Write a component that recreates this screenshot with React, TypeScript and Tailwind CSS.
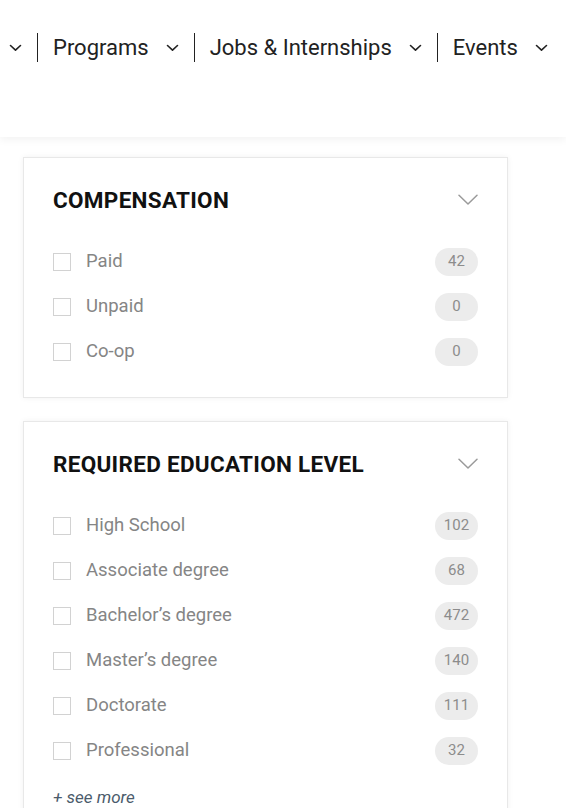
import React from 'react'

interface Option {
  label: string;
  count: number;
}

const compensation: Option[] = [
  { label: 'Paid', count: 42 },
  { label: 'Unpaid', count: 0 },
  { label: 'Co-op', count: 0 },
]

const education: Option[] = [
  { label: 'High School', count: 102 },
  { label: 'Associate degree', count: 68 },
  { label: 'Bachelor\u2019s degree', count: 472 },
  { label: 'Master\u2019s degree', count: 140 },
  { label: 'Doctorate', count: 111 },
  { label: 'Professional', count: 32 },
]

function NavChevron() {
  return (
    <svg width="13" height="8" viewBox="0 0 13 8" fill="none" className="shrink-0">
      <path d="M1.5 1.5 L6.5 6.2 L11.5 1.5" stroke="#222" strokeWidth="1.6" strokeLinecap="round" strokeLinejoin="round" />
    </svg>
  )
}

function Divider() {
  return <div className="w-px h-[29px] bg-[#222] mx-[15px]" />
}

function NavItem({ label }: { label: string }) {
  return (
    <div className="flex items-center">
      <span className="text-[22px] text-[#222] leading-none">{label}</span>
      <span className="ml-[17px]"><NavChevron /></span>
    </div>
  )
}

function FilterCard({ title, options, more }: { title: string; options: Option[]; more?: boolean }) {
  return (
    <div className="bg-white border border-[#e8e8e8] shadow-[0_0_6px_rgba(0,0,0,0.06)] px-[29px] pt-[28px] pb-[23px]">
      <div className="flex items-center justify-between h-[28px] mb-[25px]">
        <h3 className="text-[22.5px] font-bold text-[#111] uppercase leading-none tracking-[0.3px]">{title}</h3>
        <svg width="20" height="12" viewBox="0 0 20 12" fill="none">
          <path d="M1 1.2 L10 10 L19 1.2" stroke="#9a9a9a" strokeWidth="1.5" strokeLinecap="round" strokeLinejoin="round" />
        </svg>
      </div>
      <ul>
        {options.map((o) => (
          <li key={o.label} className="flex items-center h-[45px]">
            <span className="w-[18px] h-[18px] border border-[#d2d2d2] bg-white shrink-0" />
            <span className="ml-[15px] text-[18.5px] text-[#858585] leading-none">{o.label}</span>
            <span className="ml-auto w-[43px] h-[28px] rounded-full bg-[#ececec] flex items-center justify-center text-[15px] text-[#8c8c8c]">
              {o.count}
            </span>
          </li>
        ))}
      </ul>
      {more && (
        <div className="mt-[16px] text-[17px] italic text-[#4b5b6b] leading-none">+ see more</div>
      )}
    </div>
  )
}

export default function App() {
  return (
    <div className="min-h-[808px] bg-white overflow-hidden" style={{ fontFamily: 'Roboto, "Liberation Sans", sans-serif' }}>
      <header className="h-[137px] bg-white shadow-[0_3px_8px_rgba(0,0,0,0.05)] relative z-10">
        <nav className="flex items-center pl-[9px] pt-[33px] whitespace-nowrap">
          <NavChevron />
          <Divider />
          <NavItem label="Programs" />
          <Divider />
          <NavItem label="Jobs & Internships" />
          <Divider />
          <NavItem label="Events" />
        </nav>
      </header>
      <main className="pl-[23px] pt-[20px] w-[508px] flex flex-col gap-[23px]">
        <FilterCard title="Compensation" options={compensation} />
        <FilterCard title="Required Education Level" options={education} more />
      </main>
    </div>
  )
}
